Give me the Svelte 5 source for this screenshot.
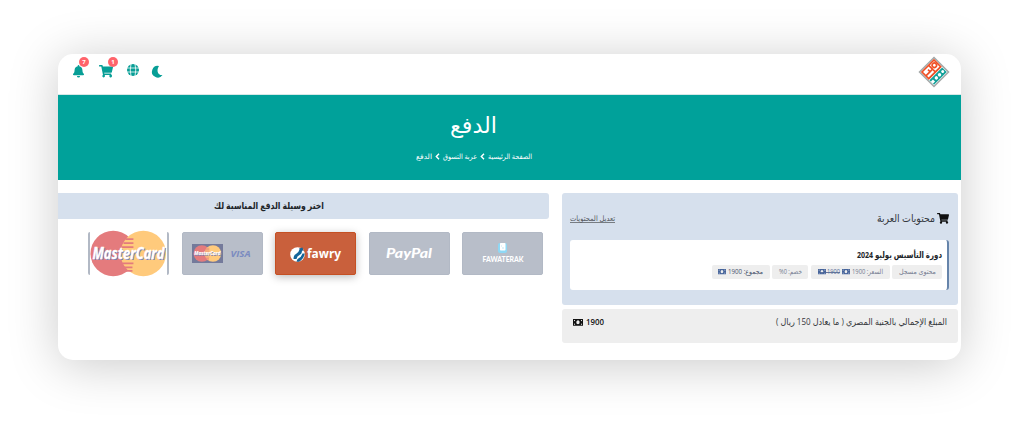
<script>
  const methods = ['fawaterak', 'paypal', 'fawry', 'cards', 'mastercard'];
</script>

{#snippet label(text, w, size, weight = 400)}
  <svg class="label" width={w} height={size * 1.8} font-size={size} font-weight={weight}>
    <text x={w / 2} y={size * 1.15} text-anchor="middle" textLength={w} lengthAdjust="spacingAndGlyphs">{text}</text>
  </svg>
{/snippet}

{#snippet cart(size)}
  <svg width={size} height={size * 0.89} viewBox="0 0 576 512" fill="currentColor"><path d="M528 301 576 93c3-15-8-29-24-29H159l-9-45C148 8 138 0 126 0H24C11 0 0 11 0 24v16c0 13 11 24 24 24h70l70 343a56 56 0 1 0 67 9h210a56 56 0 1 0 64-11l5-25c4-15-8-29-23-29H218l-6-32h293c11 0 20-8 23-18z" /></svg>
{/snippet}

{#snippet note(size)}
  <svg class="note" width={size} height={size * 0.67} viewBox="0 0 12 8" fill="currentColor"><path fill-rule="evenodd" d="M0 0h12v8H0zM1.200 1.200v1.400q1.200 0 1.400-1.400zm8.200 0q.2 1.400 1.400 1.400V1.200zM1.200 5.400v1.400h1.400Q2.400 5.400 1.200 5.400zM10.800 5.400q-1.200 0-1.400 1.400h1.400zM6 1.600C3.400 1.600 3.400 6.400 6 6.400S8.600 1.600 6 1.600z" /></svg>
{/snippet}

{#snippet master(w, h)}
  <svg width={w} height={h} viewBox="0 0 78 47">
    <circle cx="23.500" cy="23.500" r="23" fill="#e47b7d" /><circle cx="54" cy="23.500" r="23" fill="#ffca7c" />
    <path d="M36 9h8M34 13h10M32 17h12M32 33.500h12M33 37.500h10M36 41h7" stroke="#e47b7d" stroke-width="1.800" />
    <g class="mc" font-size="15.500" font-weight="700"><text x="3.500" y="30" fill="#7880b5" textLength="73" lengthAdjust="spacingAndGlyphs">MasterCard</text><text x="2.500" y="29" fill="#fff" stroke="#fff" stroke-width=".3" textLength="73" lengthAdjust="spacingAndGlyphs">MasterCard</text></g>
  </svg>
{/snippet}

<main dir="rtl">
  <header>
    <svg class="logo" width="32" height="32" viewBox="0 0 32 32" fill="none">
      <path d="M16 1.500 30.500 16 16 30.500 1.500 16z" fill="#fff" stroke="#a4a8a8" stroke-width="1.500" />
      <g transform="rotate(-45 16 16)">
        <path d="M7.500 17V7.500H24.500V17zM7.500 13h6V10M17 7.500V13h-4M17 17v-3" stroke="#ef5026" stroke-width="1.700" />
        <circle cx="21" cy="11.500" r="2.200" stroke="#ef5026" stroke-width="1.600" />
        <path d="M7 18.500h18V25H7z" fill="#13a099" />
        <path d="M7 20.500h3v3H7" fill="#fff" />
        <circle cx="13.500" cy="21.800" r="1.700" fill="#fff" /><circle cx="18" cy="21.800" r="1.700" fill="#fff" /><circle cx="22.500" cy="21.800" r="1.500" fill="#fff" />
      </g>
    </svg>
    <nav>
      <svg class="moon" width="11" height="13" viewBox="0 0 11 13"><path d="M7 1A5.800 5.800 0 1 0 10.500 10C6.500 10.800 3.700 6 7 1z" fill="currentColor" /></svg>
      <svg class="globe" width="12" height="12" viewBox="0 0 12 12"><circle cx="6" cy="6" r="6" fill="currentColor" /><path d="M0 4h12M0 8h12M4 0Q2.500 6 4 12M8 0q1.500 6 0 12" fill="none" stroke="#fff" stroke-width=".8" /></svg>
      <span class="ico basket">{@render cart(14)}<b>1</b></span>
      <span class="ico bell"><svg width="11" height="12.500" viewBox="0 0 448 512" fill="currentColor"><path d="M224 512a64 64 0 0 0 64-64H160a64 64 0 0 0 64 64zm215-150c-19-20-55-51-55-154 0-77-54-139-128-154V32a32 32 0 1 0-64 0v22C118 69 64 131 64 208c0 103-36 134-55 154-26 28-2 54 23 54h384c25 0 49-26 23-54z" /></svg><b>7</b></span>
    </nav>
  </header>

  <section class="hero">
    <h1>{@render label('الدفع', 47, 22)}</h1>
    <div class="crumbs">
      {@render label('الصفحة الرئيسية', 44, 7.2)}
      <svg width="5" height="7" viewBox="0 0 5 7"><path d="M4 .7 1.300 3.500 4 6.300" /></svg>
      {@render label('عربة التسوق', 34, 7.2)}
      <svg width="5" height="7" viewBox="0 0 5 7"><path d="M4 .7 1.300 3.500 4 6.300" /></svg>
      {@render label('الدفع', 16, 7.2)}
    </div>
  </section>

  <div class="content">
    <aside>
      <section class="basket-panel">
        <div class="heading">
          <h2>{@render cart(12)}{@render label('محتويات العربة', 58, 10.5)}</h2>
          <a href="#edit">{@render label('تعديل المحتويات', 45, 7.5)}</a>
        </div>
        <article>
          <h3>{@render label('دورة التأسيس يوليو 2024', 85, 9, 700)}</h3>
          <div class="chips">
            <span class="c1">{@render label('محتوى مسجل', 37, 7)}</span>
            <span class="c2">{@render label('السعر: 1900', 31, 7)}{@render note(8)}<del>{@render label('1900', 13, 7)}{@render note(8)}</del></span>
            <span class="c3">{@render label('خصم: 0%', 23, 7)}</span>
            <span class="c4">{@render label('مجموع: 1900', 35, 7)}{@render note(8)}</span>
          </div>
        </article>
      </section>
      <section class="total">
        {@render label('المبلغ الإجمالي بالجنية المصري ( ما يعادل 150 ريال )', 171, 9)}
        <strong>{@render label('1900', 18, 9, 600)}{@render note(10)}</strong>
      </section>
    </aside>

    <section class="payment">
      <h2>{@render label('اختر وسيلة الدفع المناسبة لك', 110, 9.5, 600)}</h2>
      <div class="methods">
        {#each methods as method}
          <button class={method} aria-label={method}>
            {#if method === 'fawaterak'}
              <svg width="42" height="22" viewBox="0 0 42 22"><rect x="16" y="0" width="9" height="10" rx="2" fill="#8ed8f5" /><rect x="18" y="0" width="5.500" height="7.500" rx=".7" fill="#fff" /><path d="M19 3h1M20 5h2" stroke="#c5e5f2" /><text x="0.5" y="18.500" fill="#fff" font-size="7" textLength="41" lengthAdjust="spacingAndGlyphs">FAWATERAK</text></svg>
            {:else if method === 'paypal'}
              <svg width="48" height="20" viewBox="0 0 48 20"><text x="1" y="14" class="pp" fill="#fff" font-size="13.500" textLength="46" lengthAdjust="spacingAndGlyphs">PayPal</text></svg>
            {:else if method === 'fawry'}
              <svg width="52" height="18" viewBox="0 0 52 18"><circle cx="7.500" cy="9.500" r="7.300" fill="#fff" /><path d="M9 3.500 12.500 2.500 13.500 6 12 5.500Q12 9 9.500 10T6.500 14H3.500Q3.500 10 6 9T9.500 4.500zM12.500 8.500H14.700Q14 14 9 16.700H6.500Q7 13.500 9 13T12.500 8.500z" fill="#15659a" /><text x="17" y="12.500" class="fw" fill="#fff" font-size="12" textLength="34" lengthAdjust="spacingAndGlyphs">fawry</text></svg>
            {:else if method === 'cards'}
              <div class="pair"><span>{@render master(29, 17)}</span><svg width="22" height="12"><text x="0.5" y="9" class="visa" fill="#7b8bc0" font-size="9" textLength="20" lengthAdjust="spacingAndGlyphs">VISA</text></svg></div>
            {:else}
              {@render master(77, 47)}
            {/if}
          </button>
        {/each}
      </div>
    </section>
  </div>
</main>

<style>
  :global(body) { background: #fff; }
  :global(#app) { display: flow-root; height: 422px; overflow: hidden; }
  * { box-sizing: border-box; }
  main { width: 903px; height: 306px; margin: 54px 0 0 58px; overflow: hidden; border-radius: 15px; background: #fff; box-shadow: 0 5px 50px rgba(0, 0, 0, .21); font-family: "Open Sans", "DejaVu Sans", sans-serif; color: #212529; }
  svg { display: block; flex: none; overflow: visible; }
  .label { fill: currentColor; }
  h1, h2, h3 { margin: 0; font-weight: 400; }
  header { height: 41px; padding: 2px 11px 0 15px; display: flex; justify-content: space-between; border-bottom: 1px solid #d5e8e7; color: #079e96; }
  nav { display: flex; align-items: flex-start; padding-top: 9px; }
  .globe { margin-right: 13px; margin-top: -1px; }
  .ico { position: relative; display: block; }
  .basket { margin-right: 14px; }
  .bell { margin-right: 15px; }
  .ico b { position: absolute; top: -8px; right: -5px; width: 10px; height: 10px; border-radius: 50%; background: #ff646b; color: #fff; font: 700 6px/10px "Noto Sans", sans-serif; text-align: center; }
  .hero { height: 85px; background: #00a19a; color: #fff; display: flex; flex-direction: column; align-items: center; padding: 13px 72px 0 0; }
  .hero h1 { height: 43px; }
  .crumbs { display: flex; align-items: flex-start; gap: 3px; }
  .crumbs > svg:not(:global(.label)) { margin-top: 2px; stroke: #fff; stroke-width: 1.400; fill: none; }
  .content { display: grid; grid-template-columns: 396px 491px; column-gap: 13px; padding: 13px 3px 0 0; }
  aside { display: grid; grid-template-rows: 112px 34px; gap: 4px; }
  .basket-panel { background: #d6e0ed; border-radius: 3px; padding: 19px 9px 0 8px; }
  .heading { display: flex; justify-content: space-between; height: 28px; }
  .heading h2 { display: flex; gap: 2px; color: #34383f; }
  .heading h2 > :global(svg:first-child) { color: #111; margin-top: 1px; }
  .heading a { color: #52565c; text-decoration: none; height: 11px; border-bottom: 1px solid #777c82; }
  .heading h2 :global(.label) { margin-top: -2px; }
  article { height: 50px; border-right: 2px solid #6684aa; border-radius: 3px; background: #fff; padding: 8px 5px 0 0; }
  h3 { height: 17px; }
  .chips { display: flex; gap: 2.500px; }
  .chips > span { height: 14px; background: #eee; border-radius: 2px; color: #747c91; display: flex; align-items: center; justify-content: center; gap: 2px; }
  .chips :global(.note) { color: #46649b; }
  .c1 { width: 50px; }
  .c2 { width: 79px; }
  .c3 { width: 36px; }
  .chips > .c4 { width: 58px; color: #47526c; }
  del { display: flex; align-items: center; gap: 1px; background: linear-gradient(#64769b, #64769b) center / 100% 1px no-repeat; text-decoration: none; color: #58709b; }
  .total { display: flex; justify-content: space-between; background: #eee; border-radius: 3px; padding: 6px 11px 0; color: #34363a; }
  .total strong { display: flex; gap: 3px; color: #111; }
  .total strong :global(.note) { margin-top: 4px; }
  .payment h2 { height: 26px; background: #d6e0ed; border-radius: 0 3px 3px 0; display: flex; justify-content: center; padding: 5px 69px 0 0; }
  .methods { display: flex; gap: 12.500px; padding: 13px 6px 0 0; }
  button { width: 81px; height: 43px; flex: none; display: flex; align-items: center; justify-content: center; padding: 0; background: #b8bec9; border: 1px solid #b2b9c5; border-radius: 2px; }
  .fawry { background: #c9603c; border-color: #c55023; box-shadow: 0 2px 8px #0004; }
  .mastercard { background: #fff; border-width: 0 2px; }
  .pair { display: flex; direction: ltr; align-items: center; gap: 7px; }
  .pair span { width: 31px; height: 19px; display: grid; place-items: center; background: #747a9b; }
  .fawaterak text { font-family: Lato, sans-serif; font-weight: 900; }
  .pp { font-family: Lato, sans-serif; font-weight: 900; font-style: italic; }
  .fw { font-family: "Noto Sans", sans-serif; font-weight: 700; }
  .visa { font-family: "Open Sans", sans-serif; font-weight: 700; font-style: italic; }
  .mc { font-family: "Open Sans", sans-serif; font-style: italic; }
  button text { direction: ltr; }
</style>
